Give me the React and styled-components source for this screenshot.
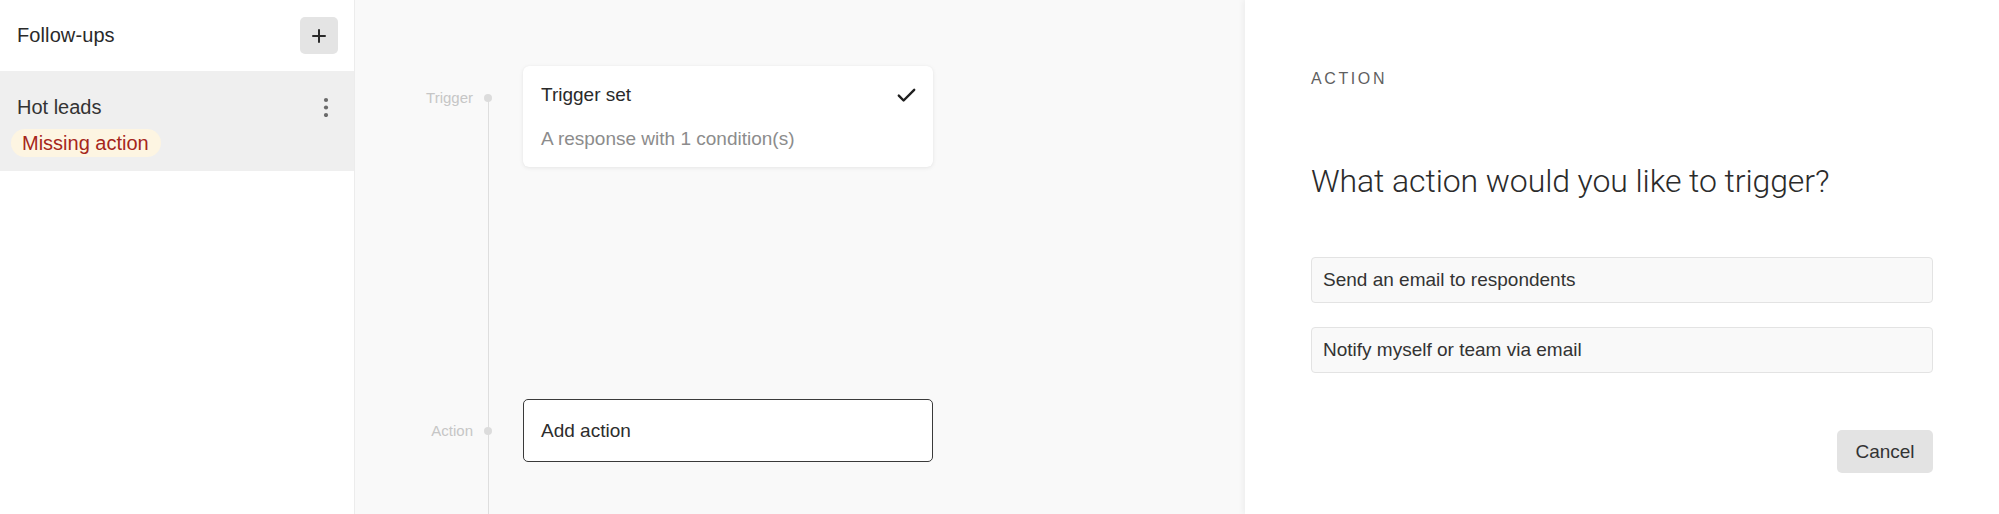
import React from "react";
import styled, { createGlobalStyle } from "styled-components";

const Global = createGlobalStyle`
  html, body { margin: 0; padding: 0; height: 100%; }
  body {
    font-family: "Liberation Sans", Arial, Helvetica, sans-serif;
    color: #2d2d2d;
    background: #ffffff;
    overflow: hidden;
  }
  #root { height: 100%; }
  * { box-sizing: border-box; }
`;

const Page = styled.div`
  display: flex;
  height: 514px;
  width: 1999px;
`;

/* ---------- Sidebar ---------- */
const Sidebar = styled.aside`
  width: 355px;
  flex: 0 0 355px;
  border-right: 1px solid #ececec;
  background: #fff;
  display: flex;
  flex-direction: column;
`;

const SidebarHeader = styled.div`
  height: 71px;
  display: flex;
  align-items: center;
  justify-content: space-between;
  padding: 0 16px 0 17px;
`;

const SidebarTitle = styled.h2`
  margin: 0;
  font-size: 20px;
  font-weight: 400;
  color: #2a2a2a;
  letter-spacing: 0.1px;
`;

const IconButton = styled.button`
  width: 38px;
  height: 37px;
  border: none;
  border-radius: 5px;
  background: #e4e4e4;
  display: flex;
  align-items: center;
  justify-content: center;
  padding: 0;
  cursor: pointer;
`;

const FollowRow = styled.div`
  height: 100px;
  background: ${(p) => (p.$active ? "#efefef" : "transparent")};
  padding: 24px 25px 0 17px;
  display: flex;
  flex-direction: column;
  align-items: flex-start;
`;

const FollowTop = styled.div`
  width: 100%;
  display: flex;
  align-items: center;
  justify-content: space-between;
  height: 24px;
`;

const FollowName = styled.span`
  font-size: 20px;
  line-height: 24px;
  color: #333;
`;

const Badge = styled.span`
  margin-top: 10px;
  margin-left: -6px;
  height: 28px;
  line-height: 28px;
  padding: 0 12px 0 11px;
  border-radius: 14px;
  background: #fdf5e2;
  color: #a6261a;
  font-size: 20px;
`;

/* ---------- Middle (flow canvas) ---------- */
const Canvas = styled.main`
  flex: 1;
  background: #f9f9f9;
  padding-top: 66px;
  display: flex;
  flex-direction: column;
`;

const StepRow = styled.div`
  display: grid;
  grid-template-columns: 118px 30px 430px;
  ${(p) => (p.$grow ? "flex: 1;" : "")}
`;

const StepLabel = styled.span`
  align-self: start;
  text-align: right;
  padding-top: 23px;
  font-size: 15px;
  line-height: 18px;
  color: #c6c6c6;
`;

const Rail = styled.div`
  display: flex;
  justify-content: center;
  align-items: flex-start;
  padding-top: 28px;
  background-image: linear-gradient(#dedede, #dedede);
  background-repeat: no-repeat;
  background-position: 15px ${(p) => (p.$fromDot ? "32px" : "0")};
  background-size: 1px 100%;
`;

const Dot = styled.span`
  width: 8px;
  height: 8px;
  border-radius: 50%;
  background: #dcdcdc;
`;

const TriggerCard = styled.div`
  align-self: start;
  margin-left: 20px;
  margin-bottom: ${(p) => p.$after || 0}px;
  width: 410px;
  height: 101px;
  background: #fff;
  border-radius: 6px;
  box-shadow: 0 1px 4px rgba(0, 0, 0, 0.08), 0 0 1px rgba(0, 0, 0, 0.06);
  padding: 17px 17px 0 18px;
  display: flex;
  flex-direction: column;
  gap: 20px;
`;

const CardTitleRow = styled.div`
  display: flex;
  align-items: center;
  justify-content: space-between;
  height: 24px;
`;

const CardTitle = styled.span`
  font-size: 19px;
  line-height: 24px;
  color: #2a2a2a;
`;

const CardSub = styled.span`
  font-size: 19px;
  line-height: 24px;
  color: #8c8c8c;
`;

const ActionBox = styled.button`
  align-self: start;
  margin-left: 20px;
  width: 410px;
  height: 63px;
  border: 1.5px solid #3a3a3a;
  border-radius: 5px;
  background: #fff;
  padding: 0 0 0 17px;
  text-align: left;
  font-family: inherit;
  font-size: 19px;
  color: #2d2d2d;
  cursor: pointer;
`;

/* ---------- Right panel ---------- */
const Panel = styled.section`
  width: 754px;
  flex: 0 0 754px;
  background: #fff;
  box-shadow: -2px 0 6px rgba(0, 0, 0, 0.05);
  position: relative;
  z-index: 1;
  padding: 69px 66px 0 66px;
  display: flex;
  flex-direction: column;
`;

const Eyebrow = styled.div`
  font-size: 16px;
  line-height: 20px;
  letter-spacing: 2.6px;
  color: #5f5f5f;
  text-transform: uppercase;
`;

const Question = styled.h1`
  margin: 73px 0 0 0;
  font-family: Roboto, "Liberation Sans", sans-serif;
  font-weight: 300;
  font-size: 32px;
  line-height: 38px;
  color: #2b2b2b;
  letter-spacing: -0.1px;
`;

const Options = styled.div`
  margin-top: 57px;
  display: flex;
  flex-direction: column;
  gap: 24px;
`;

const Option = styled.button`
  height: 46px;
  border: 1px solid #e3e3e3;
  border-radius: 4px;
  background: #f9f9f9;
  padding: 0 0 0 11px;
  text-align: left;
  font-family: inherit;
  font-size: 19px;
  color: #333;
  cursor: pointer;
`;

const Footer = styled.div`
  margin-top: 57px;
  display: flex;
  justify-content: flex-end;
`;

const SecondaryButton = styled.button`
  width: 96px;
  height: 43px;
  border: none;
  border-radius: 5px;
  background: #e3e3e3;
  font-family: inherit;
  font-size: 19px;
  color: #333;
  cursor: pointer;
`;

const PlusIcon = () => (
  <svg width="14" height="14" viewBox="0 0 14 14">
    <path d="M7 1v12M1 7h12" stroke="#2a2a2a" strokeWidth="2" strokeLinecap="round" />
  </svg>
);

const KebabIcon = () => (
  <svg width="6" height="20" viewBox="0 0 6 20">
    <circle cx="3" cy="3" r="2.1" fill="#6a6a6a" />
    <circle cx="3" cy="10.5" r="2.1" fill="#6a6a6a" />
    <circle cx="3" cy="18" r="2.1" fill="#6a6a6a" />
  </svg>
);

const CheckIcon = () => (
  <svg width="19" height="15" viewBox="0 0 19 15">
    <path d="M1.8 7.6l4.8 4.9L17.2 1.8" fill="none" stroke="#1f1f1f" strokeWidth="2.4" strokeLinecap="round" strokeLinejoin="round" />
  </svg>
);

export default function App() {
  return (
    <>
      <Global />
      <Page>
        <Sidebar>
          <SidebarHeader>
            <SidebarTitle>Follow-ups</SidebarTitle>
            <IconButton aria-label="Add follow-up">
              <PlusIcon />
            </IconButton>
          </SidebarHeader>
          <FollowRow $active>
            <FollowTop>
              <FollowName>Hot leads</FollowName>
              <KebabIcon />
            </FollowTop>
            <Badge>Missing action</Badge>
          </FollowRow>
        </Sidebar>

        <Canvas>
          <StepRow>
            <StepLabel>Trigger</StepLabel>
            <Rail $fromDot>
              <Dot />
            </Rail>
            <TriggerCard $after={232}>
              <CardTitleRow>
                <CardTitle>Trigger set</CardTitle>
                <CheckIcon />
              </CardTitleRow>
              <CardSub>A response with 1 condition(s)</CardSub>
            </TriggerCard>
          </StepRow>
          <StepRow $grow>
            <StepLabel>Action</StepLabel>
            <Rail>
              <Dot />
            </Rail>
            <ActionBox>Add action</ActionBox>
          </StepRow>
        </Canvas>

        <Panel>
          <Eyebrow>Action</Eyebrow>
          <Question>What action would you like to trigger?</Question>
          <Options>
            <Option>Send an email to respondents</Option>
            <Option>Notify myself or team via email</Option>
          </Options>
          <Footer>
            <SecondaryButton>Cancel</SecondaryButton>
          </Footer>
        </Panel>
      </Page>
    </>
  );
}
